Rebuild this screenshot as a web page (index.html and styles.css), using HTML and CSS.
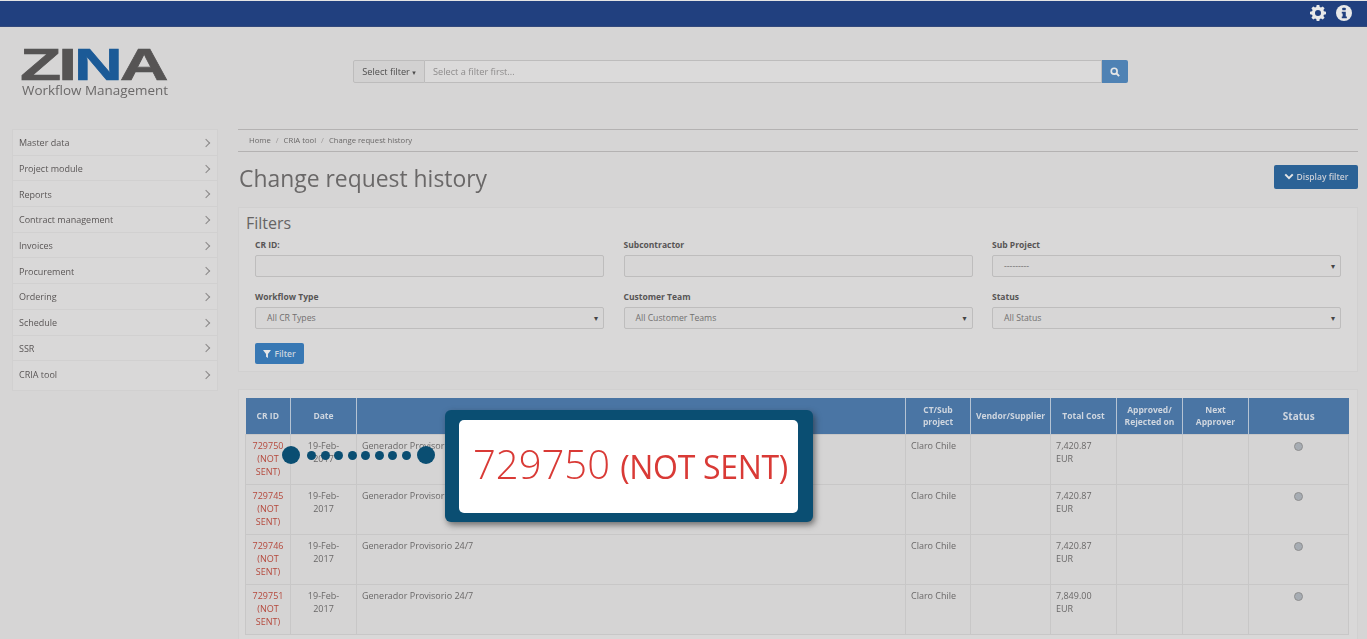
FILE: index.html
```html
<!DOCTYPE html>
<html lang="en">
<head>
<meta charset="utf-8">
<title>Change request history</title>
<link rel="stylesheet" href="styles.css">
</head>
<body>
<div class="page">
  <div class="topbar">
    <svg class="icon-gear" viewBox="0 0 24 24" width="16" height="16"><path fill="#e9e9e9" fill-rule="evenodd" d="M10 1h4l.6 3.100 1.900.8L19.100 3.100l2.800 2.800-1.800 2.600.8 1.900L24 11v4l-3.100.6-.8 1.900 1.800 2.600-2.800 2.800-2.600-1.800-1.900.8L14 25h-4l-.6-3.100-1.900-.8-2.600 1.800-2.800-2.800 1.800-2.600-.8-1.900L0 15v-4l3.100-.6.8-1.900-1.800-2.600 2.800-2.800 2.600 1.800 1.900-.8zM12 8.500a4.500 4.500 0 1 0 0 9 4.500 4.500 0 0 0 0-9z" transform="translate(0 -1)"/></svg>
    <svg class="icon-info" viewBox="0 0 18 18" width="16" height="16"><circle cx="9" cy="9" r="9" fill="#e9e9e9"/><rect x="7" y="3" width="4" height="3" rx="1" fill="#21407f"/><path d="M6.500 7.500H11V13h1.200v2H6.500v-2H7.500V9.500H6.500z" fill="#21407f"/></svg>
  </div>
  <header class="masthead">
    <div class="logo">
      <div class="logo-mark">Z<span class="logo-i">I</span><span class="logo-n">N</span>A</div>
      <div class="logo-sub">Workflow Management</div>
    </div>
    <div class="search">
      <div class="search-select">Select filter <span class="caret">▾</span></div>
      <div class="search-input">Select a filter first...</div>
      <div class="search-btn"><svg viewBox="0 0 12 12" width="10" height="10"><circle cx="5" cy="5" r="3.500" fill="none" stroke="#e6e6e6" stroke-width="2"/><path d="M7.500 7.500 11 11" stroke="#e6e6e6" stroke-width="2.200"/></svg></div>
    </div>
  </header>
  <div class="layout">
    <nav class="sidebar">
      <div class="nav-item"><span>Master data</span><i class="chev"></i></div>
      <div class="nav-item"><span>Project module</span><i class="chev"></i></div>
      <div class="nav-item"><span>Reports</span><i class="chev"></i></div>
      <div class="nav-item"><span>Contract management</span><i class="chev"></i></div>
      <div class="nav-item"><span>Invoices</span><i class="chev"></i></div>
      <div class="nav-item"><span>Procurement</span><i class="chev"></i></div>
      <div class="nav-item"><span>Ordering</span><i class="chev"></i></div>
      <div class="nav-item"><span>Schedule</span><i class="chev"></i></div>
      <div class="nav-item"><span>SSR</span><i class="chev"></i></div>
      <div class="nav-item"><span>CRIA tool</span><i class="chev"></i></div>
    </nav>
    <main class="content">
      <div class="breadcrumb"><span>Home</span><em>/</em><span>CRIA tool</span><em>/</em><span>Change request history</span></div>
      <div class="title-row">
        <h1>Change request history</h1>
        <div class="display-btn"><svg viewBox="0 0 12 8" width="10" height="7"><path d="M1.500 1.500 6 6l4.500-4.500" fill="none" stroke="#e6e6e6" stroke-width="2.400"/></svg>Display filter</div>
      </div>
      <section class="filters">
        <h2>Filters</h2>
        <div class="filter-grid">
          <div class="field"><label>CR ID:</label><div class="control"></div></div>
          <div class="field"><label>Subcontractor</label><div class="control"></div></div>
          <div class="field"><label>Sub Project</label><div class="control select"><span>---------</span><b>▾</b></div></div>
          <div class="field"><label>Workflow Type</label><div class="control select"><span>All CR Types</span><b>▾</b></div></div>
          <div class="field"><label>Customer Team</label><div class="control select"><span>All Customer Teams</span><b>▾</b></div></div>
          <div class="field"><label>Status</label><div class="control select"><span>All Status</span><b>▾</b></div></div>
        </div>
        <div class="filter-btn"><svg viewBox="0 0 10 10" width="8" height="8"><path d="M0 0h10L6.200 5v5L3.800 8.500V5z" fill="#e6e6e6"/></svg>Filter</div>
      </section>
      <section class="table-panel">
        <table>
          <colgroup>
            <col class="c-id"><col class="c-date"><col class="c-desc"><col class="c-ct"><col class="c-vendor"><col class="c-cost"><col class="c-appr"><col class="c-next"><col class="c-status">
          </colgroup>
          <thead>
            <tr><th>CR ID</th><th>Date</th><th></th><th class="th-ct">CT/Sub project</th><th>Vendor/Supplier</th><th>Total Cost</th><th>Approved/ Rejected on</th><th class="th-next">Next Approver</th><th class="th-status">Status</th></tr>
          </thead>
          <tbody>
            <tr><td class="crid">729750 (NOT SENT)</td><td class="date">19-Feb-2017</td><td>Generador Provisorio 24/7</td><td>Claro Chile</td><td></td><td class="cost">7,420.87 EUR</td><td></td><td></td><td class="st"><i class="dot"></i></td></tr>
            <tr><td class="crid">729745 (NOT SENT)</td><td class="date">19-Feb-2017</td><td>Generador Provisorio 24/7</td><td>Claro Chile</td><td></td><td class="cost">7,420.87 EUR</td><td></td><td></td><td class="st"><i class="dot"></i></td></tr>
            <tr><td class="crid">729746 (NOT SENT)</td><td class="date">19-Feb-2017</td><td>Generador Provisorio 24/7</td><td>Claro Chile</td><td></td><td class="cost">7,420.87 EUR</td><td></td><td></td><td class="st"><i class="dot"></i></td></tr>
            <tr><td class="crid">729751 (NOT SENT)</td><td class="date">19-Feb-2017</td><td>Generador Provisorio 24/7</td><td>Claro Chile</td><td></td><td class="cost">7,849.00 EUR</td><td></td><td></td><td class="st"><i class="dot"></i></td></tr>
          </tbody>
        </table>
      </section>
    </main>
  </div>
</div>
<div class="connector"><i class="big"></i><i></i><i></i><i></i><i></i><i></i><i></i><i></i><i></i><i class="big"></i></div>
<div class="callout"><div class="callout-inner"><span class="num">729750</span> <span class="ns">(NOT SENT)</span></div></div>
</body>
</html>
```
FILE: styles.css
```css
* { box-sizing: border-box; }
html, body { margin: 0; height: 639px; overflow: hidden; background: #d6d5d5; }
body { position: relative; font-family: "Open Sans", "DejaVu Sans", sans-serif; color: #5c5a5a; }

.page { filter: blur(0.7px); height: 639px; overflow: hidden; }

.topbar { height: 27px; background: #21407f; border-top: 1px solid #e4e4e4; border-bottom: 1px solid #33497c; display: flex; align-items: center; justify-content: flex-end; gap: 10px; padding: 0 15px 1px 0; }

.masthead { height: 102px; position: relative; display: flex; }
.logo { width: 353px; padding: 22px 0 0 22px; }
.logo-mark { font: 700 45px/32px "Liberation Sans", sans-serif; color: #565454; -webkit-text-stroke: 0.6px #565454; transform: scaleX(1.5); transform-origin: left top; letter-spacing: -2px; height: 32px; margin-left: -2px; }
.logo-n { color: #1b5a97; -webkit-text-stroke: 0.6px #1b5a97; }
.logo-sub { font: 13.450px/16px "Open Sans", sans-serif; color: #6a6868; margin-top: 1px; white-space: nowrap; }

.search { display: flex; height: 23px; width: 775px; margin-top: 33px; font-size: 9.200px; line-height: 21px; }
.search-select { width: 72px; border: 1px solid #bdbcbc; background: #d2d1d1; text-align: center; color: #4d4c4c; border-radius: 2px 0 0 2px; }
.caret { font-size: 7px; }
.search-input { flex: 1; border: 1px solid #bdbcbc; border-left: 0; background: #dbdada; padding-left: 8px; color: #8d8b8b; }
.search-btn { width: 26px; background: #4f82b4; display: flex; align-items: center; justify-content: center; border-radius: 0 2px 2px 0; }

.layout { display: flex; align-items: flex-start; padding-left: 12px; gap: 20px; }

.sidebar { width: 206px; flex: none; background: #d9d8d8; border: 1px solid #d1d0d0; padding-bottom: 3px; }
.nav-item { height: 25.700px; display: flex; align-items: center; justify-content: space-between; padding: 1px 8px 0 6px; font-size: 9px; color: #5a5656; border-bottom: 1px solid #d1d0d0; }
.nav-item:last-child { border-bottom: 0; }
.chev { width: 6px; height: 6px; border-top: 1.500px solid #8a8888; border-right: 1.500px solid #8a8888; transform: rotate(45deg); }

.content { width: 1120px; flex: none; }

.breadcrumb { height: 23px; border-top: 1px solid #b4b2b2; border-bottom: 1px solid #b4b2b2; display: flex; align-items: center; gap: 5px; padding: 0 0 2px 11px; font-size: 7.700px; color: #6a6868; }
.breadcrumb em { font-style: normal; color: #9c9a9a; }

.title-row { height: 55px; display: flex; align-items: center; justify-content: space-between; padding: 0 0 3px 1px; }
h1 { margin: 0; font-size: 22.900px; font-weight: 400; color: #6a6868; }
.display-btn { width: 84px; height: 24px; margin-top: -3px; background: #2b6296; border-radius: 2px; color: #c9cdd6; font-size: 8.500px; font-weight: 600; display: flex; align-items: center; justify-content: center; gap: 3px; }

.filters { height: 165px; background: #d9d8d8; border: 1px solid #d1d0d0; padding: 4px 16px 0 16px; position: relative; }
h2 { margin: 0 0 0 -9px; font-size: 16px; line-height: 22px; font-weight: 400; color: #666464; }
.filter-grid { display: grid; grid-template-columns: repeat(3, 349px); column-gap: 19.500px; row-gap: 10px; margin-top: 1px; }
.field label { display: block; font-size: 8.500px; font-weight: 700; line-height: 15px; height: 15px; margin-top: 2px; color: #575555; }
.control { height: 22px; background: #d7d6d6; border: 1px solid #bebdbd; border-radius: 2px; margin-top: 3px; font-size: 8.700px; line-height: 20px; color: #716f6f; display: flex; justify-content: space-between; padding: 0 5px 0 11px; }
.control b { font-size: 8px; color: #444; font-weight: 400; }
.filter-btn { width: 49px; height: 21px; margin-top: 14px; background: #3878b4; border-radius: 2px; color: #cbd5df; font-size: 8.500px; font-weight: 600; display: flex; align-items: center; justify-content: center; gap: 3px; }

.table-panel { margin-top: 17px; background: #d9d8d8; border: 1px solid #d1d0d0; padding: 8px 8px 0 6px; height: 260px; }
table { width: 1103px; table-layout: fixed; border-collapse: collapse; font-size: 9px; line-height: 13px; color: #6a6868; }
.c-id { width: 45px; } .c-date { width: 66px; } .c-desc { width: 549px; } .c-ct { width: 65px; } .c-vendor { width: 80px; } .c-cost { width: 66px; } .c-appr { width: 66px; } .c-next { width: 66px; } .c-status { width: 100px; }
th { height: 36px; background: #4a75a4; color: #cfd6df; font-size: 8.500px; font-weight: 700; padding: 0 1px; border-right: 1px solid #b5c3d3; line-height: 12px; text-align: center; }
th:last-child { border-right: 0; }
.th-next, .th-ct { padding: 0 12px; }
.th-status { font-size: 10px; }
td { height: 50px; padding: 4px 5px; vertical-align: top; border: 1px solid #c8c7c7; background: #d5d4d4; }
.crid { color: #b5483c; text-align: center; padding: 4px 2px; }
.date { text-align: center; padding: 4px 12px; }
.cost { padding-right: 14px; }
.st { text-align: center; padding-top: 6px; }
.dot { display: inline-block; width: 9px; height: 9px; border-radius: 50%; background: #a6acb3; border: 1px solid #8f8f8f; }

.connector { position: absolute; left: 282px; top: 446px; width: 153px; height: 18px; display: flex; align-items: center; justify-content: space-between; }
.connector i { width: 9px; height: 9px; border-radius: 50%; background: #0a4e72; }
.connector i.big { width: 18px; height: 18px; }
.connector i.big:first-child { margin-right: 3px; }
.connector i.big:last-child { margin-left: 2px; }

.callout { position: absolute; left: 445px; top: 410px; width: 368px; height: 112px; background: #0a4e72; border-radius: 6px; box-shadow: 2px 3px 6px rgba(40, 40, 40, 0.6); padding: 10px 15px 9px 14px; }
.callout-inner { height: 93px; background: #fff; border-radius: 5px; padding-left: 14px; color: #d93a36; white-space: nowrap; line-height: 88px; filter: blur(0.3px); }
.num { font-size: 40px; font-weight: 300; }
.ns { font-size: 32px; font-weight: 400; letter-spacing: -0.300px; margin-left: 6px; }
```
